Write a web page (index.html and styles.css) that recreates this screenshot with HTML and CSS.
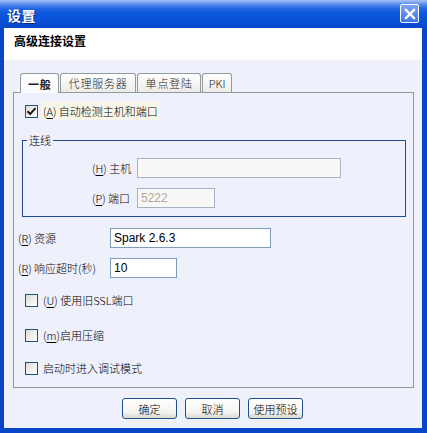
FILE: index.html
```html
<!DOCTYPE html>
<html lang="zh-CN">
<head>
    <meta charset="UTF-8">
    <title>设置</title>
    <link rel="stylesheet" href="styles.css">
</head>
<body>
    <div class="ventana">
        <div class="barra_titulo">
            <span class="titulo">设置</span>
            <span class="cerrar">
                <svg width="12" height="12" viewBox="0 0 12 12"><path d="M2 2 L10 10 M10 2 L2 10" stroke="#fff" stroke-width="2.4" stroke-linecap="square"/></svg>
            </span>
        </div>

        <div class="cuerpo">
            <div class="cabecera">高级连接设置</div>

            <div class="contenido">
                <div class="pestanas">
                    <div class="pestana activa">一般</div>
                    <div class="pestana">代理服务器</div>
                    <div class="pestana">单点登陆</div>
                    <div class="pestana latina">PKI</div>
                </div>

                <div class="panel">
                    <div class="fila_check primera">
                        <span class="casilla">
                            <svg width="11" height="11" viewBox="0 0 11 11"><path d="M1.5 5.2 L4.2 8 L9.5 2.2" fill="none" stroke="#1a1a1a" stroke-width="2"/></svg>
                        </span>
                        <span class="etiqueta foco">(<u>A</u>) 自动检测主机和端口</span>
                    </div>

                    <fieldset class="grupo">
                        <legend>连线</legend>
                        <div class="rejilla">
                            <label>(<u>H</u>) 主机</label>
                            <input type="text" class="campo deshabilitado ancho_host" disabled>
                            <label>(<u>P</u>) 端口</label>
                            <input type="text" class="campo deshabilitado ancho_puerto" value="5222" disabled>
                        </div>
                    </fieldset>

                    <div class="fila_campo recurso">
                        <label>(<u>R</u>) 资源</label>
                        <input type="text" class="campo ancho_recurso" value="Spark 2.6.3">
                    </div>
                    <div class="fila_campo tiempo">
                        <label>(<u>R</u>) 响应超时(秒)</label>
                        <input type="text" class="campo ancho_tiempo" value="10">
                    </div>

                    <div class="fila_check ssl">
                        <span class="casilla"></span>
                        <span class="etiqueta">(<u>U</u>) 使用旧SSL端口</span>
                    </div>
                    <div class="fila_check compresion">
                        <span class="casilla"></span>
                        <span class="etiqueta">(<u>m</u>)启用压缩</span>
                    </div>
                    <div class="fila_check depurar">
                        <span class="casilla"></span>
                        <span class="etiqueta">启动时进入调试模式</span>
                    </div>
                </div>

                <div class="botones">
                    <button>确定</button>
                    <button>取消</button>
                    <button>使用预设</button>
                </div>
            </div>
        </div>
    </div>
</body>
</html>
```

FILE: styles.css
```css
body {
    margin: 0;
    background-color: #ffffff;
    font-family: "Noto Sans CJK SC", "Liberation Sans", sans-serif;
    font-size: 11px;
    font-weight: 300;
    color: #000000;
}

.ventana {
    width: 427px;
    height: 433px;
    display: flex;
    flex-direction: column;
    background-color: #0845c8;
    box-sizing: border-box;
}

.barra_titulo {
    height: 28px;
    display: flex;
    align-items: center;
    justify-content: space-between;
    padding: 0 8px 0 7px;
    background: linear-gradient(#a9c3f6 0px, #5e90ee 4px, #1f63e2 9px, #0b56dc 14px, #0a50d6 22px, #0846c8 28px);
}

.titulo {
    color: #ffffff;
    font-size: 14px;
    font-weight: bold;
    letter-spacing: 0.5px;
    text-shadow: 1px 1px 0 #0a2a80;
    margin-top: 1px;
}

.cerrar {
    width: 17px;
    height: 17px;
    border: 1px solid #ffffff;
    border-radius: 2px;
    background: linear-gradient(#7ea4f2, #3f74e4);
    display: flex;
    align-items: center;
    justify-content: center;
    margin-top: -1px;
}

.cuerpo {
    flex: 1;
    display: flex;
    flex-direction: column;
    margin: 0 5px 5px 4px;
}

.cabecera {
    height: 32px;
    background-color: #ffffff;
    padding-left: 10px;
    font-size: 12px;
    font-weight: bold;
    line-height: 26px;
    box-sizing: border-box;
}

.contenido {
    flex: 1;
    background-color: #eef0fc;
    padding-top: 12px;
}

.pestanas {
    display: flex;
    align-items: flex-end;
    margin-left: 16px;
    height: 20px;
}

.pestana {
    height: 18px;
    padding: 0 7px 0 8px;
    border: 1px solid #919b9c;
    border-bottom: none;
    border-radius: 3px 3px 0 0;
    background: linear-gradient(#ffffff, #ecebe6);
    line-height: 18px;
    letter-spacing: 0.8px;
    color: #222222;
    margin-right: 1px;
}

.pestana.latina {
    letter-spacing: 0;
    padding: 0 6px;
}

.pestana.activa {
    height: 19px;
    padding: 0 6px 0 7px;
    background: #fcfcfe;
    font-weight: bold;
    line-height: 20px;
    position: relative;
    top: 1px;
    z-index: 1;
}

.panel {
    height: 296px;
    margin: 0 8px 0 9px;
    border: 1px solid #919b9c;
    background-color: #eef0fc;
    box-sizing: border-box;
    display: flex;
    flex-direction: column;
}

.fila_check {
    height: 18px;
    display: flex;
    align-items: center;
    padding-left: 11px;
}

.fila_check.primera { margin-top: 9px; }
.fila_check.ssl { margin-top: 13px; }
.fila_check.compresion { margin-top: 17px; }
.fila_check.depurar { margin-top: 15px; }

.casilla {
    width: 11px;
    height: 11px;
    border: 1px solid #1c5180;
    background: linear-gradient(135deg, #dcdcd6, #ffffff);
    display: flex;
    align-items: center;
    justify-content: center;
    margin-right: 5px;
}

.etiqueta {
    padding: 1px 2px;
    margin-left: -2px;
}

.etiqueta.foco {
    background-color: #f7f6e8;
}

.grupo {
    margin: 12px 7px 0 8px;
    padding: 10px 0 8px 0;
    border: 1px solid #1e4e8c;
    min-width: 0;
}

.grupo legend {
    margin-left: 4px;
    padding: 0 2px;
    line-height: 16px;
}

.rejilla {
    display: grid;
    grid-template-columns: 45px auto;
    row-gap: 10px;
    align-items: center;
    justify-content: start;
    padding-left: 69px;
}

.campo {
    height: 20px;
    box-sizing: border-box;
    border: 1px solid #7f9db9;
    background-color: #ffffff;
    font-family: "Liberation Sans", sans-serif;
    font-size: 12px;
    padding: 0 3px;
    margin: 0;
    color: #000000;
}

.campo.deshabilitado {
    background-color: #f8f8f6;
    border-color: #a7b2c2;
    color: #aca899;
}

.ancho_host { width: 204px; }
.ancho_puerto { width: 78px; }
.ancho_recurso { width: 161px; }
.ancho_tiempo { width: 67px; }

.fila_campo {
    display: flex;
    align-items: center;
    padding-left: 4px;
}

.fila_campo label {
    width: 92px;
}

.fila_campo.recurso { margin-top: 11px; }
.fila_campo.tiempo { margin-top: 10px; }

u {
    text-decoration-thickness: 1px;
    text-underline-offset: 2px;
}

.botones {
    display: flex;
    justify-content: center;
    gap: 8px;
    margin-top: 10px;
    padding-right: 1px;
}

button {
    width: 55px;
    height: 21px;
    border: 1px solid #1f4f8f;
    border-radius: 3px;
    background: linear-gradient(#ffffff, #f4f3ee 70%, #d8d6cc);
    font-family: "Noto Sans CJK SC", sans-serif;
    font-size: 11px;
    font-weight: 300;
    color: #000000;
    padding: 0;
    box-shadow: inset 0 -1px 0 #e2dfd4;
}
```
